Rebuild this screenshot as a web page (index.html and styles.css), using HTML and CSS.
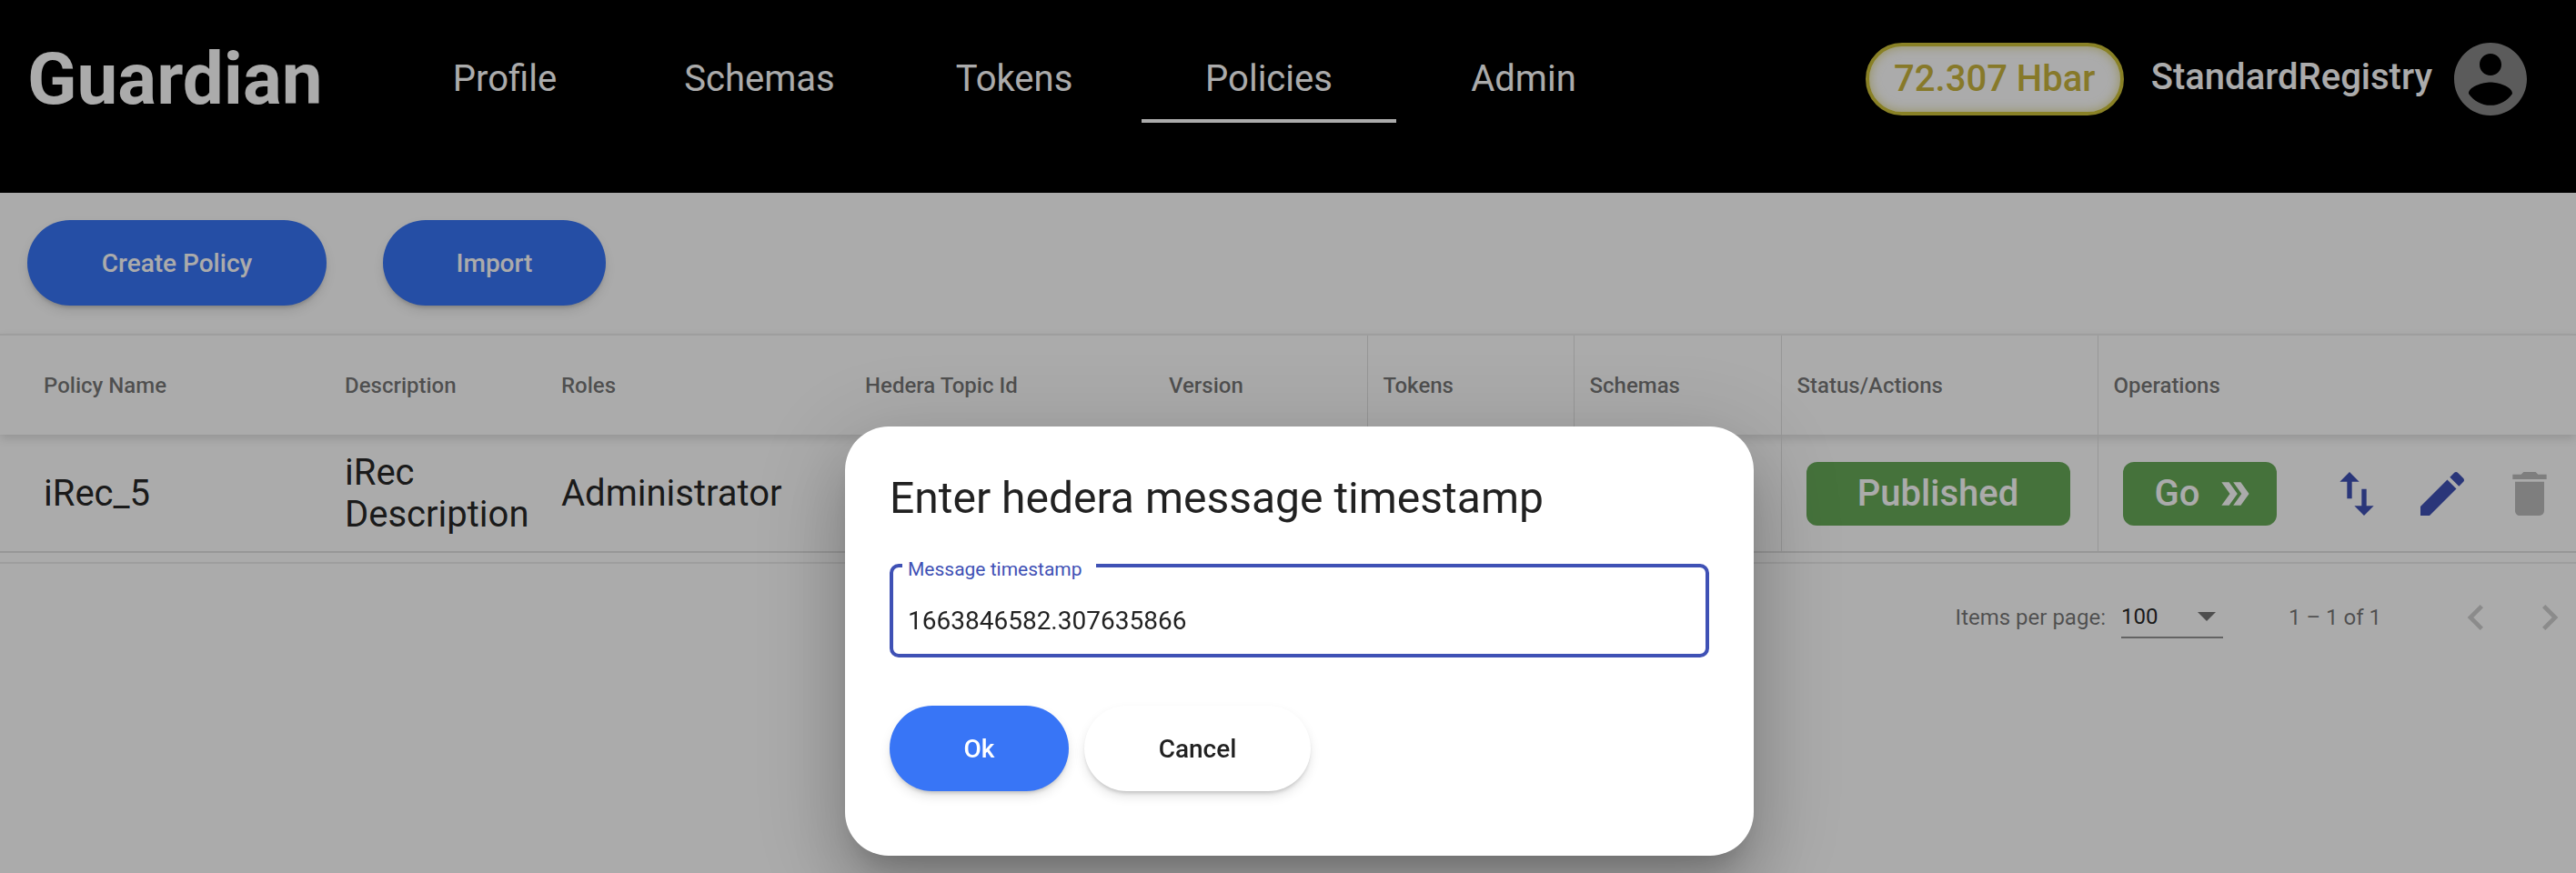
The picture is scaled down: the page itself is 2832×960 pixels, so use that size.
FILE: index.html
```html
<!DOCTYPE html>
<html lang="en">
<head>
  <meta charset="UTF-8" />
  <title>Guardian - Policies</title>
  <link rel="stylesheet" href="styles.css">
</head>
<body>

<header class="topbar">
  <div class="logo">Guardian</div>
  <nav class="tabs">
    <a class="tab">Profile</a>
    <a class="tab">Schemas</a>
    <a class="tab">Tokens</a>
    <a class="tab active">Policies</a>
    <a class="tab">Admin</a>
  </nav>
  <div class="balance">72.307 Hbar</div>
  <div class="username">StandardRegistry</div>
  <svg class="avatar" viewBox="2 2 20 20"><path d="M12 2C6.48 2 2 6.48 2 12s4.48 10 10 10 10-4.48 10-10S17.52 2 12 2zm0 3c1.66 0 3 1.34 3 3s-1.34 3-3 3-3-1.34-3-3 1.34-3 3-3zm0 14.2c-2.5 0-4.71-1.28-6-3.22.03-1.99 4-3.08 6-3.08 1.99 0 5.97 1.09 6 3.08-1.29 1.94-3.5 3.22-6 3.22z"/></svg>
</header>

<div class="toolbar">
  <button class="pill-btn create">Create Policy</button>
  <button class="pill-btn import">Import</button>
</div>

<table class="policies">
  <thead>
    <tr>
      <th class="col-name">Policy Name</th>
      <th class="col-desc">Description</th>
      <th class="col-roles">Roles</th>
      <th class="col-topic">Hedera Topic Id</th>
      <th class="col-version">Version</th>
      <th class="col-tokens sep">Tokens</th>
      <th class="col-schemas sep">Schemas</th>
      <th class="col-status sep">Status/Actions</th>
      <th class="col-ops sep">Operations</th>
    </tr>
  </thead>
  <tbody>
    <tr>
      <td>iRec_5</td>
      <td>iRec Description</td>
      <td>Administrator</td>
      <td></td>
      <td></td>
      <td class="sep"></td>
      <td class="sep"></td>
      <td class="sep"><span class="status-btn">Published</span></td>
      <td class="sep">
        <div class="ops">
          <span class="go-btn">Go
            <svg viewBox="0 0 24 24"><path d="M15.5 5H11l5 7-5 7h4.5l5-7z"/><path d="M8.5 5H4l5 7-5 7h4.5l5-7z"/></svg>
          </span>
          <svg class="op-icon swap" viewBox="0 0 24 24"><path d="M16 17.01V10h-2v7.01h-3L15 21l4-3.99h-3zM9 3L5 6.99h3V14h2V6.99h3L9 3z"/></svg>
          <svg class="op-icon edit" viewBox="0 0 24 24"><path d="M3 17.25V21h3.75L17.81 9.94l-3.75-3.75L3 17.25zM20.71 7.04c.39-.39.39-1.02 0-1.41l-2.34-2.34c-.39-.39-1.02-.39-1.41 0l-1.83 1.83 3.75 3.75 1.83-1.83z"/></svg>
          <svg class="op-icon trash" viewBox="0 0 24 24"><path d="M6 19c0 1.1.9 2 2 2h8c1.1 0 2-.9 2-2V7H6v12zM19 4h-3.5l-1-1h-5l-1 1H5v2h14V4z"/></svg>
        </div>
      </td>
    </tr>
  </tbody>
</table>

<div class="paginator">
  <span class="per-page">Items per page:</span>
  <div class="page-select">
    <span>100</span>
    <i class="select-arrow"></i>
  </div>
  <span class="range">1 – 1 of 1</span>
  <svg class="page-arrow" viewBox="0 0 24 24"><path d="M15.41 7.41L14 6l-6 6 6 6 1.41-1.41L10.83 12z"/></svg>
  <svg class="page-arrow" viewBox="0 0 24 24"><path d="M10 6L8.59 7.41 13.17 12l-4.58 4.59L10 18l6-6z"/></svg>
</div>

<div class="backdrop"></div>

<div class="dialog">
  <h2>Enter hedera message timestamp</h2>
  <div class="field">
    <label for="timestamp">Message timestamp</label>
    <input type="text" id="timestamp" value="1663846582.307635866">
  </div>
  <div class="dialog-actions">
    <button class="pill-btn ok">Ok</button>
    <button class="pill-btn cancel">Cancel</button>
  </div>
</div>

</body>
</html>
```

FILE: styles.css
```css
* {
  box-sizing: border-box;
}
html, body {
  height: 100%;
}
body {
  margin: 0;
  overflow: hidden;
  background: #fff;
  font-family: Roboto, "Liberation Sans", sans-serif;
  color: rgba(0,0,0,0.87);
}

/* top bar */
.topbar {
  display: flex;
  align-items: flex-start;
  height: 212px;
  padding: 47px 54px 0 30px;
  background: #000;
  color: #fff;
}
.logo {
  width: 385px;
  font-size: 80px;
  font-weight: 700;
  line-height: 80px;
}
.tabs {
  display: flex;
}
.tab {
  width: 280px;
  height: 88px;
  font-size: 40px;
  line-height: 80px;
  text-align: center;
}
.tab.active {
  border-bottom: 4px solid #fff;
}
.balance {
  width: 284px;
  height: 80px;
  margin-left: auto;
  border: 4px solid #cdc03a;
  border-radius: 40px;
  box-shadow: inset 0 0 12px rgba(205,192,58,0.6);
  background: #fff;
  color: #c9b53e;
  font-size: 40px;
  font-weight: 500;
  line-height: 72px;
  text-align: center;
}
.username {
  margin-left: 30px;
  font-size: 40px;
  font-weight: 500;
  line-height: 76px;
}
.avatar {
  width: 80px;
  height: 80px;
  margin-left: 24px;
  fill: #888;
}

/* buttons */
.pill-btn {
  height: 94px;
  border: none;
  border-radius: 47px;
  font-family: inherit;
  font-size: 28px;
  font-weight: 500;
  box-shadow: 0 4px 4px -2px rgba(0,0,0,0.18), 0 6px 12px 0 rgba(0,0,0,0.1);
}
.toolbar {
  display: flex;
  gap: 62px;
  height: 155px;
  padding: 30px 0 0 30px;
}
.create, .import, .ok {
  background: #3875f6;
  color: #fff;
}
.create {
  width: 329px;
}
.import {
  width: 245px;
}

/* table */
.policies {
  width: 100%;
  table-layout: fixed;
  border-collapse: collapse;
  border-top: 2px solid #ececec;
}
.policies th {
  height: 110px;
  padding: 0 17px;
  font-size: 24px;
  font-weight: 500;
  text-align: left;
  color: rgba(0,0,0,0.54);
}
.policies thead tr {
  box-shadow: 0 4px 10px rgba(0,0,0,0.14);
}
.policies td {
  height: 129px;
  padding: 2px 17px 0;
  font-size: 40px;
  line-height: 46px;
  border-bottom: 2px solid #e2e2e2;
}
.policies th:first-child, .policies td:first-child {
  padding-left: 48px;
}
.policies .sep {
  border-left: 1px solid #e2e2e2;
}
.col-name { width: 362px; }
.col-desc { width: 238px; }
.col-roles { width: 334px; }
.col-topic { width: 334px; }
.col-version { width: 235px; }
.col-tokens { width: 227px; }
.col-schemas { width: 228px; }
.col-status { width: 348px; }
.col-ops { width: 526px; }

.status-btn, .go-btn {
  display: inline-flex;
  align-items: center;
  height: 70px;
  margin-left: 10px;
  border-radius: 12px;
  background: #68ab58;
  color: #fff;
  font-weight: 500;
}
.status-btn {
  justify-content: center;
  width: 290px;
}
.go-btn {
  gap: 17px;
  width: 169px;
  padding-left: 35px;
}
.go-btn svg {
  width: 44px;
  height: 44px;
  fill: #fff;
}
.ops {
  display: flex;
  align-items: center;
}
.op-icon {
  width: 64px;
  height: 64px;
  fill: #3f51b5;
}
.swap {
  margin-left: 56px;
}
.edit {
  margin-left: 30px;
}
.trash {
  margin-left: 32px;
  fill: #bcbcbc;
}

/* paginator */
.paginator {
  display: flex;
  align-items: center;
  height: 120px;
  margin-top: 10px;
  padding-right: 1px;
  border-top: 2px solid #ececec;
  justify-content: flex-end;
  font-size: 24px;
  color: rgba(0,0,0,0.54);
}
.page-select {
  display: flex;
  align-items: center;
  justify-content: space-between;
  width: 112px;
  height: 46px;
  margin-left: 17px;
  padding-right: 8px;
  border-bottom: 2px solid rgba(0,0,0,0.42);
  color: rgba(0,0,0,0.87);
}
.select-arrow {
  width: 0;
  height: 0;
  border-left: 10px solid transparent;
  border-right: 10px solid transparent;
  border-top: 10px solid rgba(0,0,0,0.54);
}
.range {
  margin-left: 72px;
  margin-right: 76px;
}
.page-arrow {
  width: 56px;
  height: 56px;
  fill: #cfcfcf;
}
.page-arrow + .page-arrow {
  margin-left: 25px;
}

/* dialog */
.backdrop {
  position: fixed;
  inset: 0;
  background: rgba(0,0,0,0.33);
}
.dialog {
  position: absolute;
  left: 929px;
  top: 469px;
  width: 999px;
  height: 472px;
  padding: 51px 49px 0;
  border-radius: 48px;
  background: #fff;
  box-shadow: 0 22px 30px -14px rgba(0,0,0,0.2), 0 48px 76px 6px rgba(0,0,0,0.14), 0 18px 92px 16px rgba(0,0,0,0.12);
}
.dialog h2 {
  margin: 0 0 44px;
  font-size: 48px;
  font-weight: 400;
  line-height: 56px;
}
.field {
  position: relative;
  height: 103px;
  border: 4px solid #3f51b5;
  border-radius: 10px;
}
.field label {
  position: absolute;
  left: 10px;
  top: -10px;
  padding: 0 15px 0 6px;
  background: #fff;
  color: #3f51b5;
  font-size: 21px;
  line-height: 24px;
}
.field input {
  display: block;
  width: 100%;
  height: 100%;
  padding: 22px 16px 0;
  border: none;
  outline: none;
  background: none;
  font-family: inherit;
  font-size: 28px;
  color: rgba(0,0,0,0.87);
}
.dialog-actions {
  display: flex;
  gap: 17px;
  margin-top: 53px;
}
.ok {
  width: 197px;
}
.cancel {
  width: 249px;
  background: #fff;
  color: rgba(0,0,0,0.87);
}
```
